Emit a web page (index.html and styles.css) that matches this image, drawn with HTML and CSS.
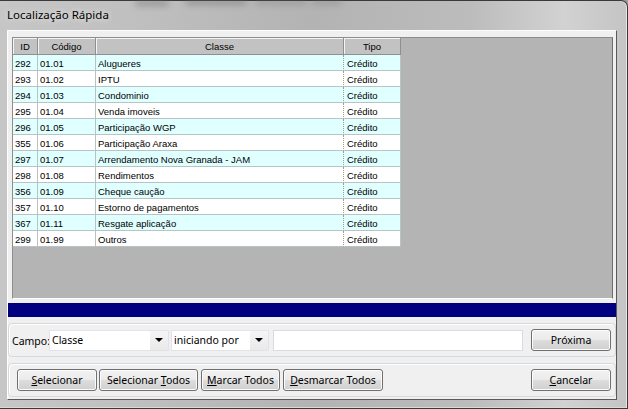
FILE: index.html
```html
<!DOCTYPE html>
<html lang="pt">
<head>
<meta charset="utf-8">
<title>Localização Rápida</title>
<link rel="stylesheet" href="styles.css">
</head>
<body>
<div class="window">
  <div class="titlebar">
    <span class="title">Localização Rápida</span>
    <span class="ghost g1"></span>
    <span class="ghost g2"></span>
    <span class="ghost g3"></span>
    <span class="ghost g4"></span>
  </div>
  <div class="client">
    <div class="gridwrap">
      <div class="grid">
        <div class="hd">ID</div><div class="hd">Código</div><div class="hd">Classe</div><div class="hd">Tipo</div>

        <div class="cell alt">292</div><div class="cell alt">01.01</div><div class="cell alt">Alugueres</div><div class="cell alt tipo">Crédito</div>
        <div class="cell">293</div><div class="cell">01.02</div><div class="cell">IPTU</div><div class="cell tipo">Crédito</div>
        <div class="cell alt">294</div><div class="cell alt">01.03</div><div class="cell alt">Condominio</div><div class="cell alt tipo">Crédito</div>
        <div class="cell">295</div><div class="cell">01.04</div><div class="cell">Venda imoveis</div><div class="cell tipo">Crédito</div>
        <div class="cell alt">296</div><div class="cell alt">01.05</div><div class="cell alt">Participação WGP</div><div class="cell alt tipo">Crédito</div>
        <div class="cell">355</div><div class="cell">01.06</div><div class="cell">Participação Araxa</div><div class="cell tipo">Crédito</div>
        <div class="cell alt">297</div><div class="cell alt">01.07</div><div class="cell alt">Arrendamento Nova Granada - JAM</div><div class="cell alt tipo">Crédito</div>
        <div class="cell">298</div><div class="cell">01.08</div><div class="cell">Rendimentos</div><div class="cell tipo">Crédito</div>
        <div class="cell alt">356</div><div class="cell alt">01.09</div><div class="cell alt">Cheque caução</div><div class="cell alt tipo">Crédito</div>
        <div class="cell">357</div><div class="cell">01.10</div><div class="cell">Estorno de pagamentos</div><div class="cell tipo">Crédito</div>
        <div class="cell alt">367</div><div class="cell alt">01.11</div><div class="cell alt">Resgate aplicação</div><div class="cell alt tipo">Crédito</div>
        <div class="cell">299</div><div class="cell">01.99</div><div class="cell">Outros</div><div class="cell tipo">Crédito</div>
      </div>
    </div>
    <div class="bluebar"></div>
    <div class="group search">
      <span class="label">Campo:</span>
      <div class="combo c-campo"><span class="combo-text">Classe</span><span class="combo-btn"><span class="arrow"></span></span></div>
      <div class="combo c-modo"><span class="combo-text">iniciando por</span><span class="combo-btn"><span class="arrow"></span></span></div>
      <div class="textbox"></div>
      <button class="btn b-proxima">Próxima</button>
    </div>
    <div class="group actions">
      <button class="btn b-sel"><u>S</u>elecionar</button>
      <button class="btn b-seltodos">Selecionar <u>T</u>odos</button>
      <button class="btn b-marcar"><u>M</u>arcar Todos</button>
      <button class="btn b-desmarcar"><u>D</u>esmarcar Todos</button>
      <span class="spacer"></span>
      <button class="btn b-cancelar"><u>C</u>ancelar</button>
    </div>
  </div>
</div>
</body>
</html>
```
FILE: styles.css
```css
* { box-sizing: border-box; }
html, body { margin: 0; padding: 0; }
body {
  width: 628px;
  height: 409px;
  overflow: hidden;
  background: #9a9a9a;
  font-family: "Liberation Sans", Arial, sans-serif;
}

.window {
  width: 628px;
  height: 409px;
  display: flex;
  flex-direction: column;
  background: linear-gradient(90deg, #c6c6c6 0%, #c0c0c0 20%, #b3b3b3 50%, #bcbcbc 75%, #d2d2d2 90%, #c4c4c4 100%);
  border-top: 1px solid #3a3a3a;
  border-right: 1px solid #3a3a3a;
  border-bottom: 1px solid #3a3a3a;
  border-top-right-radius: 7px;
  padding: 0 10px 8px 7px;
  box-shadow: inset -1px 0 0 #e6e6e6, inset 0 -1px 0 #dadada;
}

.titlebar {
  height: 29px;
  position: relative;
  display: flex;
  align-items: center;
  padding-bottom: 2px;
}
.title {
  position: relative;
  z-index: 1;
  font-family: "Noto Sans", "Open Sans", sans-serif;
  font-size: 11.5px;
  color: #000;
  text-shadow: 0 0 6px rgba(255,255,255,0.9);
}
.ghost {
  position: absolute;
  top: -2px;
  height: 6px;
  background: #6a6a6a;
  filter: blur(3px);
  opacity: 0.45;
  border-radius: 3px;
}
.ghost.g1 { left: 128px; width: 34px; top: -1px; }
.ghost.g2 { left: 178px; width: 62px; }
.ghost.g3 { left: 248px; width: 52px; opacity: 0.3; }
.ghost.g4 { left: 305px; width: 30px; opacity: 0.3; }

.client {
  flex: 1;
  background: #f0f0f0;
  border-top: 1px solid #fdfdfd;
  border-left: 1px solid #fdfdfd;
  border-right: 1px solid #5a5a5a;
  border-bottom: 1px solid #5a5a5a;
  display: flex;
  flex-direction: column;
  padding-top: 6px;
}

.gridwrap {
  height: 262px;
  margin: 0 3px 0 4px;
  background: #b4b4b4;
  border: 1px solid #8d8d8d;
  border-right-color: #6d6d6d;
  border-bottom-color: #ffffff;
}

.grid {
  display: grid;
  grid-template-columns: 25px 58px 248px 57px;
  grid-auto-rows: 16px;
  grid-template-rows: 17px;
  width: 388px;
  font-size: 9.5px;
  color: #000;
}
.hd {
  background: #c2c2c2;
  border-right: 1px solid #8f8f8f;
  border-bottom: 1px solid #8f8f8f;
  box-shadow: inset 1px 1px 0 #f4f4f4;
  display: flex;
  align-items: center;
  justify-content: center;
  padding-top: 1px;
}
.cell {
  background: #ffffff;
  border-right: 1px solid #b8c3c3;
  border-bottom: 1px solid #b8c3c3;
  padding-left: 2px;
  padding-top: 1px;
  display: flex;
  align-items: center;
  white-space: nowrap;
  overflow: hidden;
}
.cell.alt { background: #e0ffff; }
.cell.tipo { border-left: 1px dotted #9c9c9c; margin-left: -1px; padding-left: 3px; }

.bluebar {
  height: 14px;
  margin-top: 4px;
  background: #000080;
}

.group {
  height: 34px;
  margin-top: 6px;
  border: 1px solid #d3d9de;
  border-radius: 4px;
  box-shadow: inset 1px 1px 0 #ffffff;
  display: flex;
  align-items: center;
  font-family: "Noto Sans", "Open Sans", sans-serif;
  font-size: 10.5px;
  color: #000;
}

.search { padding: 0 4px 0 3px; }
.label { width: 37px; flex-shrink: 0; white-space: nowrap; padding-top: 1px; }

.combo {
  height: 21px;
  flex-shrink: 0;
  background: #ffffff;
  border: 1px solid #e2e3ea;
  display: flex;
  align-items: center;
}
.combo-text { flex: 1; padding-left: 2px; }
.combo-btn {
  width: 18px;
  height: 100%;
  background: linear-gradient(#f5f5f5, #e9e9e9);
  display: flex;
  align-items: center;
  justify-content: center;
}
.arrow {
  width: 0;
  height: 0;
  border-left: 4px solid transparent;
  border-right: 4px solid transparent;
  border-top: 4px solid #000;
}
.c-campo { width: 120px; }
.c-modo { width: 98px; margin-left: 2px; }
.textbox {
  width: 250px;
  height: 21px;
  flex-shrink: 0;
  margin-left: 4px;
  background: #fff;
  border: 1px solid #d8dce2;
}

.btn {
  height: 22px;
  flex-shrink: 0;
  padding: 0;
  border: 1px solid #707070;
  border-radius: 3px;
  background: linear-gradient(#f2f2f2 0%, #ebebeb 48%, #dddddd 52%, #cfcfcf 100%);
  box-shadow: inset 0 0 0 1px #fbfbfb;
  font-family: "Noto Sans", "Open Sans", sans-serif;
  font-size: 10.5px;
  color: #000;
  line-height: 18px;
}
.btn u { text-decoration-thickness: 1px; text-underline-offset: 1px; }
.b-proxima { width: 80px; margin-left: 8px; }

.actions { padding: 0 4px 0 8px; }
.b-sel { width: 80px; }
.b-seltodos { width: 99px; margin-left: 2px; }
.b-marcar { width: 79px; margin-left: 3px; }
.b-desmarcar { width: 100px; margin-left: 3px; }
.spacer { flex: 1; }
.b-cancelar { width: 80px; }
```
